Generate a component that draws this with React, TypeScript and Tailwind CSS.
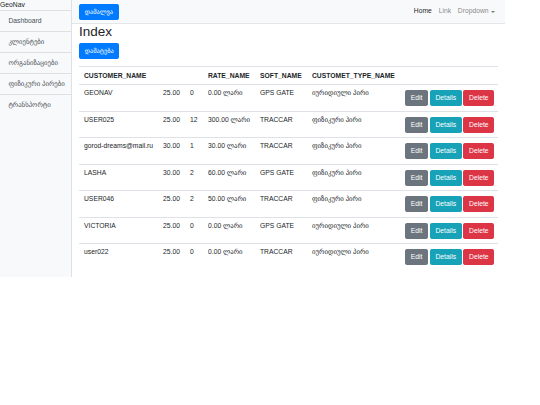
import React from "react";

const rows = [
  ["GEONAV", "25.00", "0", "0.00 ლარი", "GPS GATE", "იურიდიული პირი"],
  ["USER025", "25.00", "12", "300.00 ლარი", "TRACCAR", "ფიზიკური პირი"],
  ["gorod-dreams@mail.ru", "30.00", "1", "30.00 ლარი", "TRACCAR", "ფიზიკური პირი"],
  ["LASHA", "30.00", "2", "60.00 ლარი", "GPS GATE", "ფიზიკური პირი"],
  ["USER046", "25.00", "2", "50.00 ლარი", "TRACCAR", "ფიზიკური პირი"],
  ["VICTORIA", "25.00", "0", "0.00 ლარი", "GPS GATE", "იურიდიული პირი"],
  ["user022", "25.00", "0", "0.00 ლარი", "TRACCAR", "იურიდიული პირი"],
];

const side = ["Dashboard", "კლიენტები", "ორგანიზაციები", "ფიზიკური პირები", "ტრანსპორტი"];

const cols = "grid grid-cols-[79px_27px_18px_52px_52px_93px_98px]";

function Btn({ label, color, size = "text-[6.75px]" }: { label: string; color: string; size?: string }) {
  return (
    <span
      className={`inline-flex items-center h-[16px] px-[4.7px] rounded-[1.7px] text-white leading-[10px] border border-solid ${size} ${color}`}
    >
      {label}
    </span>
  );
}

export default function App() {
  return (
    <div
      className="flex items-stretch w-[540px] bg-white text-[#212529] text-[6.75px] leading-[10.1px]"
      style={{ fontFamily: '"Liberation Sans", "DejaVu Sans", Arial, sans-serif' }}
    >
      <aside className="w-[72px] shrink-0 bg-[#f8f9fa] border-r border-[#dee2e6]">
        <div className="h-[10px] leading-[9px] text-[#212529]">GeoNav</div>
        {side.map((s) => (
          <div
            key={s}
            className="h-[21px] flex items-center pl-[8.4px] text-[#495057] border-t border-[#dfdfe0] whitespace-nowrap"
          >
            {s}
          </div>
        ))}
      </aside>
      <div className="w-[433px] shrink-0">
        <nav className="h-[24px] bg-[#f8f9fa] border-b border-[#e4e6e8] flex items-center justify-between px-[7px]">
          <Btn label="დამალვა" color="bg-[#007bff] border-[#007bff]" size="text-[6.4px]" />
          <div className="flex items-center">
            <span className="px-[3.4px] text-[rgba(0,0,0,0.9)]">Home</span>
            <span className="px-[3.4px] text-[rgba(0,0,0,0.5)]">Link</span>
            <span className="pl-[3.4px] pr-[3.4px] text-[rgba(0,0,0,0.5)] flex items-center">
              Dropdown
              <span className="ml-[2px] w-0 h-0 border-l-[2px] border-r-[2px] border-t-[2.2px] border-l-transparent border-r-transparent border-t-[rgba(0,0,0,0.5)]" />
            </span>
          </div>
        </nav>
        <div className="px-[7px] pb-[7px]">
          <h2 className="text-[13.5px] leading-[16.2px] font-normal mb-[3px]">Index</h2>
          <div className="mb-[7px]">
            <Btn label="დამატება" color="bg-[#007bff] border-[#007bff]" size="text-[6.4px]" />
          </div>
          <div className="w-[419px]">
            <div className={`${cols} h-[18px] border-t border-[#dee2e6] font-bold items-center`}>
              <div className="px-[5px] whitespace-nowrap">CUSTOMER_NAME</div>
              <div className="px-[5px]"></div>
              <div className="px-[5px]"></div>
              <div className="px-[5px] whitespace-nowrap">RATE_NAME</div>
              <div className="px-[5px] whitespace-nowrap">SOFT_NAME</div>
              <div className="px-[5px] whitespace-nowrap">CUSTOMET_TYPE_NAME</div>
              <div className="px-[5px]"></div>
            </div>
            {rows.map((r, i) => (
              <div key={i} className={`${cols} h-[26.5px] border-t border-[#dee2e6] items-start`}>
                <div className="px-[5px] pt-[3px] whitespace-nowrap">{r[0]}</div>
                <div className="px-[5px] pt-[3px]">{r[1]}</div>
                <div className="px-[5px] pt-[3px]">{r[2]}</div>
                <div className="px-[5px] pt-[3px] whitespace-nowrap">{r[3]}</div>
                <div className="px-[5px] pt-[3px] whitespace-nowrap">{r[4]}</div>
                <div className="px-[5px] pt-[3px] whitespace-nowrap">{r[5]}</div>
                <div className="px-[5px] pt-[5px] flex gap-[1.7px]">
                  <Btn label="Edit" color="bg-[#6c757d] border-[#6c757d]" />
                  <Btn label="Details" color="bg-[#17a2b8] border-[#17a2b8]" />
                  <Btn label="Delete" color="bg-[#dc3545] border-[#dc3545]" />
                </div>
              </div>
            ))}
          </div>
        </div>
      </div>
    </div>
  );
}
